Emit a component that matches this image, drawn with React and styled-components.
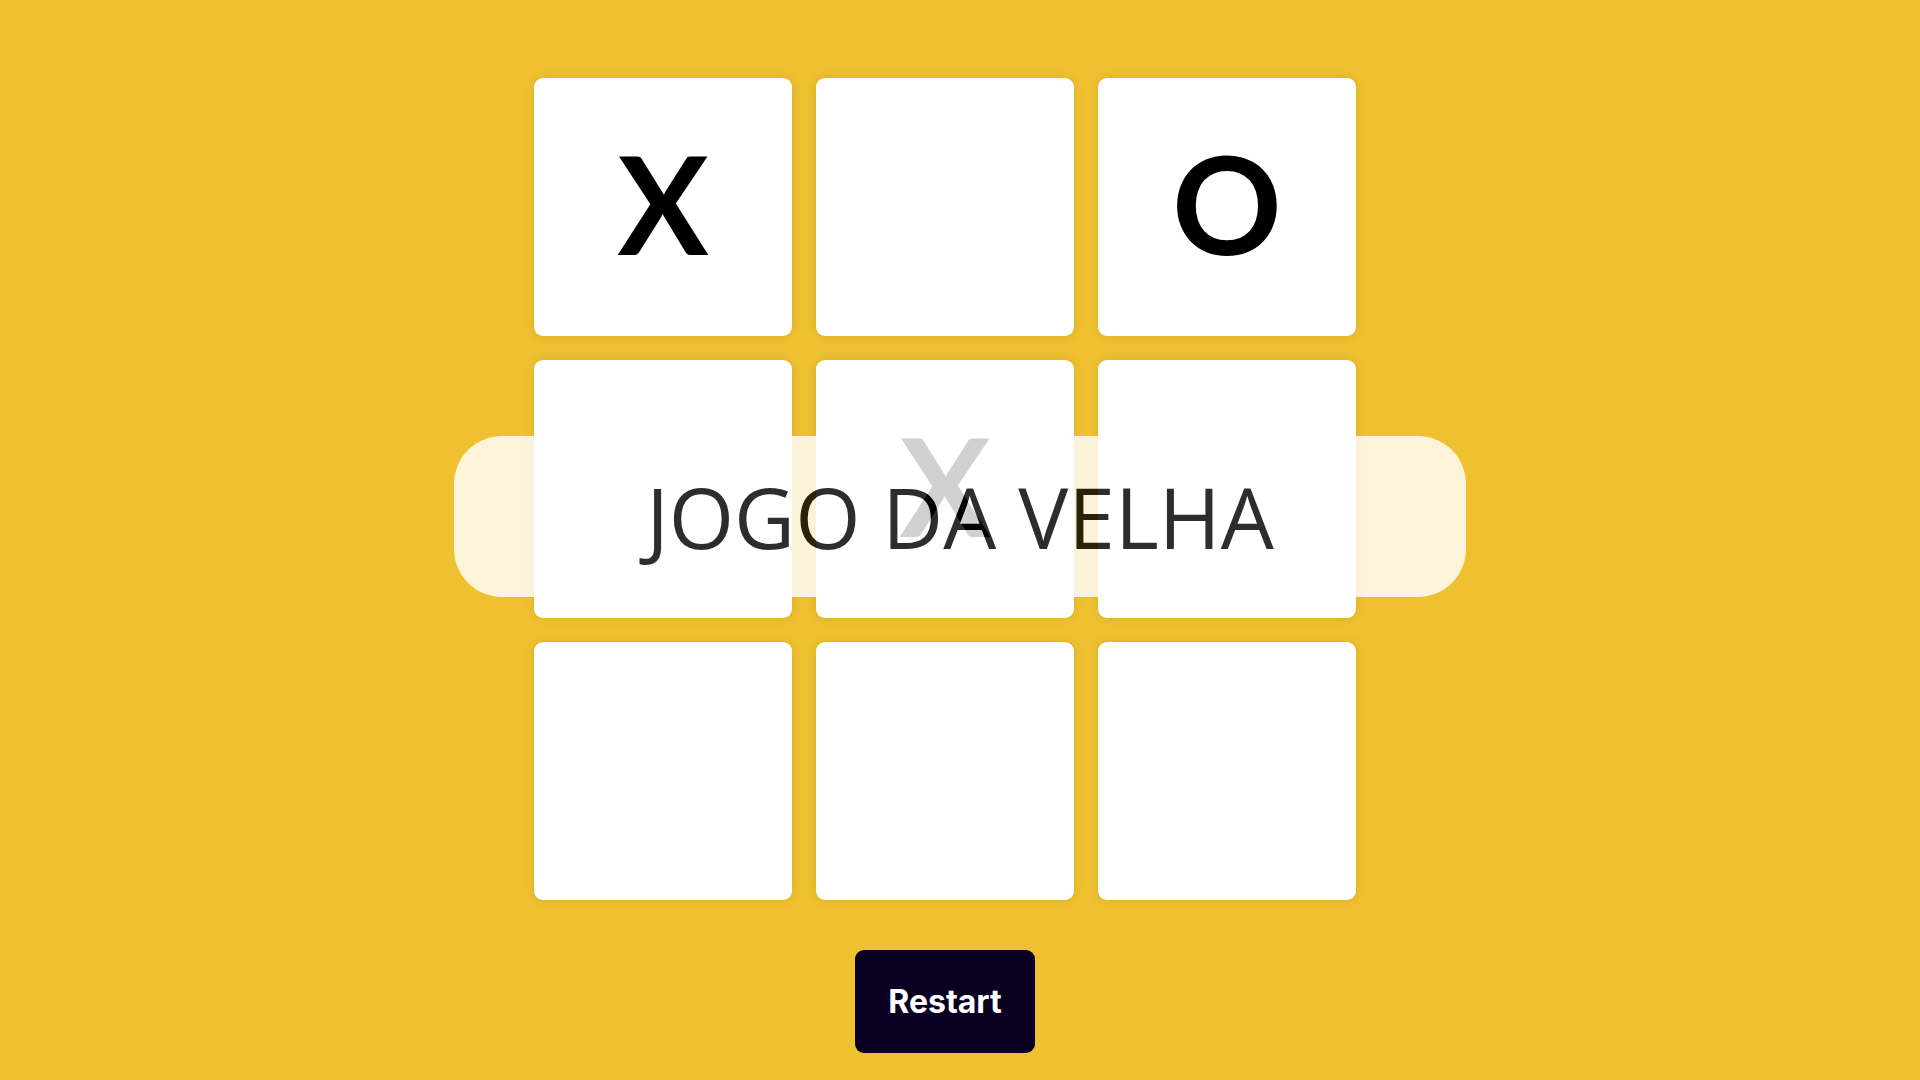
import React, { useState } from 'react'
import styled, { createGlobalStyle } from 'styled-components'

const GlobalStyle = createGlobalStyle`
  html, body {
    margin: 0;
    padding: 0;
  }
  body {
    background-color: #efc131;
    font-family: "Lato", "Liberation Sans", sans-serif;
  }
`

const App = () => {
  const [board, setBoard] = useState(['X', '', 'O', '', 'X', '', '', '', ''])

  const onClickCell = (i) => {
    if (board[i]) return
    const next = [...board]
    next[i] = board.filter(Boolean).length % 2 === 0 ? 'X' : 'O'
    setBoard(next)
  }

  const onClickRestart = () => {
    setBoard(['', '', '', '', '', '', '', '', ''])
  }

  return (
    <StPage>
      <GlobalStyle />
      <StBoard>
        {board.map((mark, i) => (
          <StCell key={i} onClick={() => onClickCell(i)}>
            {mark}
          </StCell>
        ))}
      </StBoard>

      <StRestartButton onClick={onClickRestart}>Restart</StRestartButton>

      {/*타이틀 배너*/}
      <StTitleBanner>JOGO DA VELHA</StTitleBanner>
    </StPage>
  )
}

const StPage = styled.div`
  position: relative;
  min-height: 100vh;
  box-sizing: border-box;
  padding: 78px 30px 0 0;
  display: flex;
  flex-direction: column;
  align-items: center;
  background-color: #efc131;
`

const StBoard = styled.div`
  display: grid;
  grid-template-columns: repeat(3, 258px);
  grid-auto-rows: 258px;
  gap: 24px;
`

const StCell = styled.div`
  display: flex;
  align-items: center;
  justify-content: center;
  box-sizing: border-box;
  padding-bottom: 8px;
  background-color: #fff;
  border-radius: 9px;
  box-shadow: 0 0 10px rgba(120, 80, 0, 0.18);
  font-family: "Lato", "Liberation Sans", sans-serif;
  font-weight: 700;
  font-size: 136px;
  line-height: 1;
  color: #000;
  cursor: pointer;
  user-select: none;
`

const StRestartButton = styled.button`
  margin-top: 50px;
  width: 180px;
  height: 103px;
  border: none;
  border-radius: 9px;
  background-color: #0a0122;
  color: #fff;
  font-family: "Inter", "Liberation Sans", sans-serif;
  font-weight: 700;
  font-size: 32px;
  cursor: pointer;
`

const StTitleBanner = styled.div`
  position: absolute;
  top: 436px;
  left: 50%;
  transform: translateX(-50%);
  width: 1012px;
  height: 161px;
  display: flex;
  align-items: center;
  justify-content: center;
  border-radius: 48px;
  background-color: #fff;
  opacity: 0.82;
  color: #000;
  font-family: "Open Sans", "Liberation Sans", sans-serif;
  font-weight: 400;
  font-size: 84px;
  pointer-events: none;
`

export default App
